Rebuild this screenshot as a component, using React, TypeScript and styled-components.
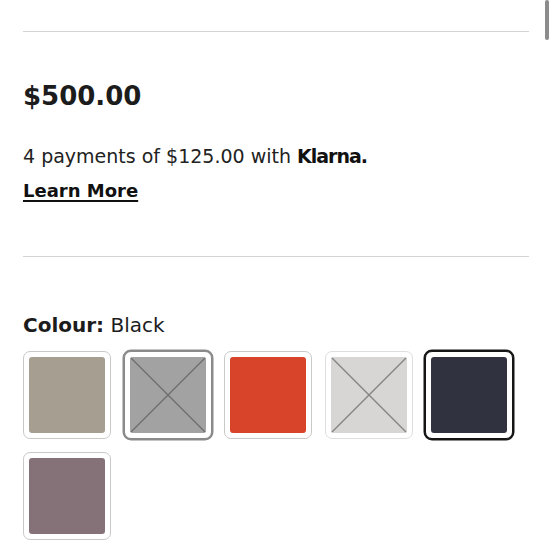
import * as React from "react";
import styled, { createGlobalStyle, css } from "styled-components";

const GlobalStyle = createGlobalStyle`
  html, body {
    margin: 0;
    padding: 0;
    background: #ffffff;
  }
  body {
    font-family: "DejaVu Sans", "Liberation Sans", sans-serif;
    color: #1a1a1a;
  }
`;

interface Swatch {
  name: string;
  color: string;
  crossed?: boolean;
  lines?: string;
  ring?: string;
}

const swatches: Swatch[] = [
  { name: "Stone", color: "#a79e92" },
  { name: "Grey", color: "#a2a2a2", crossed: true, lines: "#6f6f6f", ring: "#8a8a8a" },
  { name: "Red", color: "#d8442a" },
  { name: "Light Grey", color: "#d7d6d4", crossed: true, lines: "#858585" },
  { name: "Black", color: "#30323f", ring: "#151515" },
  { name: "Mauve", color: "#857279" },
];

const Page = styled.div`
  padding: 31px 25px 0 23px;
`;

const Divider = styled.hr<{ $gap: number }>`
  border: none;
  height: 1px;
  background: #d4d4d4;
  margin: 0 0 ${(p) => p.$gap}px 0;
`;

const Price = styled.div`
  font-size: 26px;
  line-height: 30px;
  font-weight: bold;
  color: #1c1c1c;
  margin-bottom: 33px;
`;

const Payments = styled.div`
  font-size: 19px;
  line-height: 24px;
  color: #222;
  margin-bottom: 11px;
`;

const Klarna = styled.strong`
  font-weight: bold;
  letter-spacing: -1px;
  color: #111;
`;

const LearnMore = styled.a`
  display: block;
  width: fit-content;
  font-size: 18px;
  line-height: 24px;
  font-weight: bold;
  color: #111;
  text-decoration: underline;
  text-decoration-thickness: 2px;
  text-underline-offset: 3px;
  margin-bottom: 53px;
  cursor: pointer;
`;

const ColourLabel = styled.div`
  font-size: 20px;
  line-height: 24px;
  color: #1c1c1c;
  margin-bottom: 14px;

  b {
    font-weight: bold;
  }
`;

const SwatchGrid = styled.div`
  display: grid;
  grid-template-columns: repeat(5, 88px);
  column-gap: 12.5px;
  row-gap: 13px;
`;

const SwatchButton = styled.button<{ $ring?: string; $soft?: boolean }>`
  box-sizing: border-box;
  width: 88px;
  height: 88px;
  padding: 5px;
  margin: 0;
  background: #fff;
  border: 1px solid ${(p) => (p.$soft ? "#dedede" : "#c9c9c9")};
  border-radius: 7px;
  cursor: pointer;
  ${(p) =>
    p.$ring &&
    css`
      border-color: ${p.$ring};
      box-shadow: 0 0 0 1.5px ${p.$ring};
    `}
`;

const SwatchFill = styled.div<{ $color: string }>`
  width: 100%;
  height: 100%;
  border-radius: 3px;
  background: ${(p) => p.$color};
  overflow: hidden;
`;

const Scrollbar = styled.div`
  position: fixed;
  top: 0;
  right: 5px;
  width: 4px;
  height: 40px;
  border-radius: 2px;
  background: #8c8c8c;
`;

function Cross({ color }: { color: string }) {
  return (
    <svg width="100%" height="100%" viewBox="0 0 76 76" preserveAspectRatio="none">
      <line x1="0" y1="0" x2="76" y2="76" stroke={color} strokeWidth="1.4" />
      <line x1="76" y1="0" x2="0" y2="76" stroke={color} strokeWidth="1.4" />
    </svg>
  );
}

export default function App() {
  return (
    <>
      <GlobalStyle />
      <Scrollbar />
      <Page>
        <Divider $gap={49} />
        <Price>$500.00</Price>
        <Payments>
          4 payments of $125.00 with <Klarna>Klarna.</Klarna>
        </Payments>
        <LearnMore>Learn More</LearnMore>
        <Divider $gap={56} />
        <ColourLabel>
          <b>Colour:</b> Black
        </ColourLabel>
        <SwatchGrid>
          {swatches.map((s) => (
            <SwatchButton
              key={s.name}
              aria-label={s.name}
              $ring={s.ring}
              $soft={s.name === "Light Grey"}
            >
              <SwatchFill $color={s.color}>
                {s.crossed && <Cross color={s.lines || "#777"} />}
              </SwatchFill>
            </SwatchButton>
          ))}
        </SwatchGrid>
      </Page>
    </>
  );
}
